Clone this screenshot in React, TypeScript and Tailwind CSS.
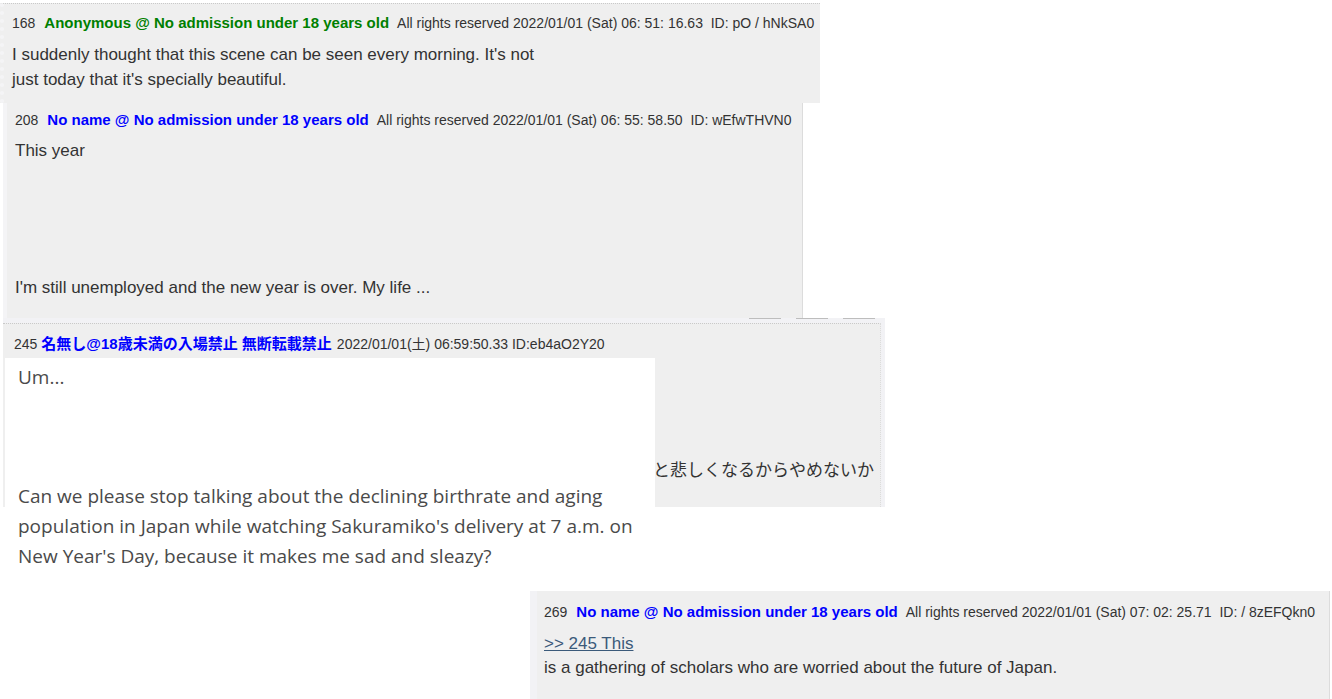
const sans = "font-['Liberation_Sans',Arial,'Noto_Sans_CJK_JP',sans-serif]";

interface HeaderProps {
  num: string;
  name: string;
  meta: string;
  nameColor?: string;
}

const PostHeader: React.FC<HeaderProps> = ({ num, name, meta, nameColor = "text-[#0000ff]" }) => (
  <div className="flex items-baseline whitespace-pre text-[14px] leading-[18px] text-[#333]">
    <span>{num}</span>
    <span className={`ml-[9px] text-[15px] font-bold ${nameColor}`}>{name}</span>
    <span className="ml-[8px]">{meta}</span>
  </div>
);

export default function App() {
  return (
    <div className={`relative h-[699px] w-[1332px] overflow-hidden bg-white ${sans}`}>
      {/* 168 */}
      <div className="absolute left-0 top-0 h-[103px] w-[820px] pt-[3px]">
        <div className="h-full border-t border-dotted border-[#c9c9c9] border-l-4 border-l-[#f4f4f6] bg-[#efefef] pl-[8px] pt-[10px]">
          <PostHeader
            num="168"
            name="Anonymous @ No admission under 18 years old"
            meta="All rights reserved 2022/01/01 (Sat) 06: 51: 16.63  ID: pO / hNkSA0"
            nameColor="text-[#008000]"
          />
          <p className="mt-[10px] text-[17px] leading-[25px] text-[#333]">
            I suddenly thought that this scene can be seen every morning. It's not
            <br />
            just today that it's specially beautiful.
          </p>
        </div>
      </div>

      {/* 208 */}
      <div className="absolute left-[3px] top-[103px] h-[215px] w-[800px] border-l-4 border-r border-l-[#f4f4f6] border-r-[#dcdcdc] bg-[#efefef] pl-[8px] pt-[8px]">
        <PostHeader
          num="208"
          name="No name @ No admission under 18 years old"
          meta="All rights reserved 2022/01/01 (Sat) 06: 55: 58.50  ID: wEfwTHVN0"
        />
        <p className="mt-[9px] text-[17px] leading-[25px] text-[#333]">This year</p>
        <p className="mt-[112px] text-[17px] leading-[25px] text-[#333]">
          I'm still unemployed and the new year is over. My life ...
        </p>
      </div>

      {/* 245 */}
      <div className="absolute left-[3px] top-[318px] flex h-[189px] w-[882px] flex-col bg-[#f2f2f5]">
        <div className="flex h-[5px] gap-[15px] pl-[746px]">
          <div className="h-[1px] w-[32px] bg-[#bdbdbd]" />
          <div className="h-[1px] w-[32px] bg-[#bdbdbd]" />
          <div className="h-[1px] w-[32px] bg-[#bdbdbd]" />
        </div>
        <div className="mr-[4px] flex-1 border-t border-dotted border-r border-t-[#c9c9c9] border-r-[#dcdcdc] bg-[#efefef] pl-[11px] pt-[11px]">
          <div className="flex items-baseline whitespace-nowrap text-[14px] leading-[18px] text-[#333]">
            <span>245</span>
            <span className="ml-[4px] text-[15px] font-bold text-[#0000ff]">名無し@18歳未満の入場禁止 無断転載禁止</span>
            <span className="ml-[5px]">2022/01/01(土) 06:59:50.33 ID:eb4aO2Y20</span>
          </div>
          <p className="mt-[106px] text-right pr-[6px] text-[17px] leading-[24px] text-[#333]">
            と悲しくなるからやめないか
          </p>
        </div>
      </div>

      {/* translation overlay */}
      <div className="absolute left-[5px] top-[358px] h-[227px] w-[650px] bg-white pl-[13px] pt-[4px] font-['Open_Sans','Noto_Sans',sans-serif] text-[19px] leading-[30px] text-[#4a4a4a]">
        <p>Um...</p>
        <p className="mt-[89px]">
          Can we please stop talking about the declining birthrate and aging population in Japan while
          watching Sakuramiko's delivery at 7 a.m. on New Year's Day, because it makes me sad and sleazy?
        </p>
      </div>

      {/* 269 */}
      <div className="absolute left-[530px] top-[591px] h-[108px] w-[800px] border-l-[7px] border-r border-l-[#f2f2f5] border-r-[#dcdcdc] bg-[#efefef] pl-[7px] pt-[12px]">
        <PostHeader
          num="269"
          name="No name @ No admission under 18 years old"
          meta="All rights reserved 2022/01/01 (Sat) 07: 02: 25.71  ID: / 8zEFQkn0"
        />
        <p className="mt-[11px] text-[17px] leading-[24px] text-[#333]">
          <a className="text-[#3b5a7a] underline">&gt;&gt; 245 This</a>
          <br />
          is a gathering of scholars who are worried about the future of Japan.
        </p>
      </div>
    </div>
  );
}
